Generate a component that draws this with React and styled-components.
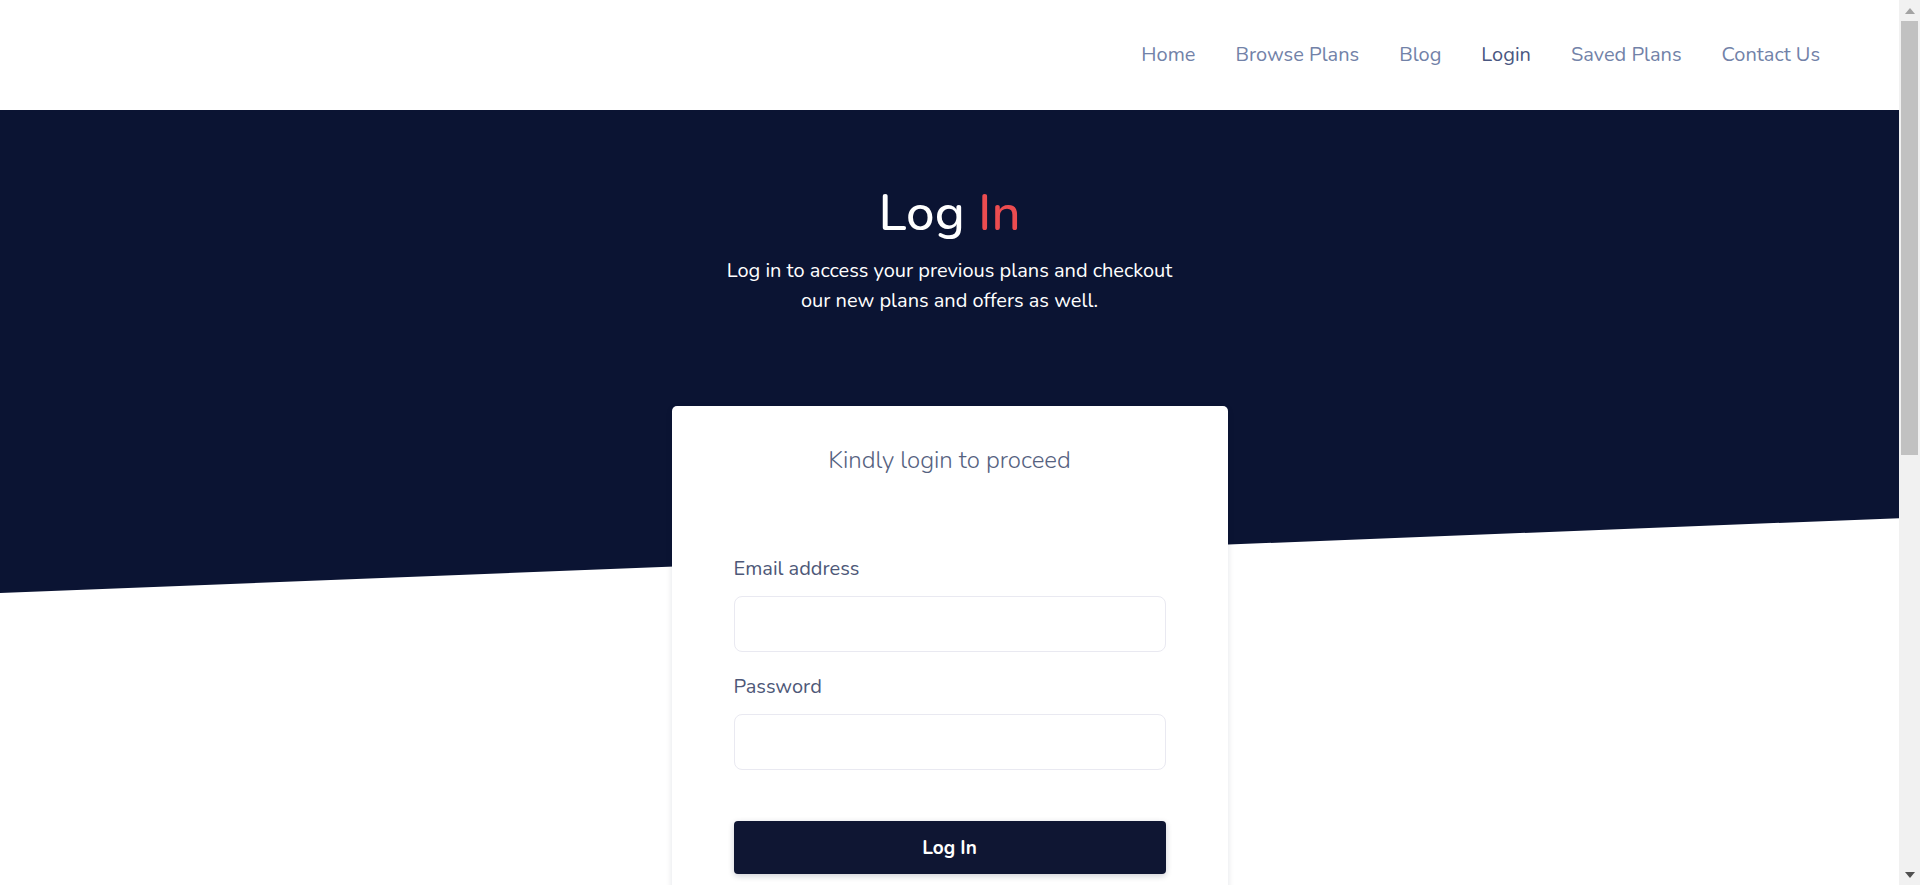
import React from "react";
import styled, { createGlobalStyle } from "styled-components";

const Global = createGlobalStyle`
  html, body { margin: 0; padding: 0; }
  body {
    font-family: "Nunito", "Lato", "Open Sans", sans-serif;
    background: #ffffff;
  }
  * { box-sizing: border-box; }
`;

const Page = styled.div`
  min-height: 1720px;
  margin-right: 21px;
  display: flex;
  flex-direction: column;
`;

const Header = styled.header`
  height: 110px;
  display: flex;
  align-items: center;
  justify-content: flex-end;
  padding: 0 79px 0 0;
  background: #fff;
`;

const Nav = styled.nav`
  display: flex;
  gap: 40px;
`;

const NavLink = styled.a`
  font-size: 20px;
  line-height: 28px;
  color: ${(p) => (p.$active ? "#4a5781" : "#7282a8")};
  text-decoration: none;
  cursor: pointer;
`;

const Hero = styled.section`
  height: 483px;
  background: #0b1433;
  clip-path: polygon(0 0, 100% 0, 100% 84.5%, 0 100%);
  display: flex;
  flex-direction: column;
  align-items: center;
  padding-top: 74px;
`;

const Title = styled.h1`
  margin: 0;
  font-size: 51px;
  line-height: 58px;
  font-weight: 500;
  color: #ffffff;
`;

const Accent = styled.span`
  color: #ec4c50;
`;

const Subtitle = styled.p`
  margin: 14px 0 0;
  font-size: 20px;
  line-height: 30px;
  color: #ffffff;
  text-align: center;
  max-width: 470px;
`;

const CardArea = styled.section`
  display: flex;
  justify-content: center;
  margin-top: -187px;
  position: relative;
`;

const Card = styled.div`
  width: 556px;
  background: #fff;
  border-radius: 5px;
  box-shadow: 0 2px 6px rgba(20, 30, 60, 0.12);
  padding: 38px 62px 60px;
  display: flex;
  flex-direction: column;
`;

const CardTitle = styled.h2`
  margin: 0 0 78px;
  font-size: 24px;
  line-height: 33px;
  font-weight: 300;
  color: #56627f;
  text-align: center;
`;

const Label = styled.label`
  font-size: 20px;
  line-height: 28px;
  color: #4e5878;
  margin-bottom: 13px;
`;

const Input = styled.input`
  height: 56px;
  width: 100%;
  border: 1px solid #e9e9f1;
  border-radius: 8px;
  background: #fff;
  padding: 0 16px;
  font-size: 16px;
  font-family: inherit;
  outline: none;
  margin-bottom: ${(p) => p.$mb || 0}px;
`;

const Button = styled.button`
  height: 53px;
  width: 100%;
  border: none;
  border-radius: 4px;
  background: #0f1633;
  color: #fff;
  font-family: inherit;
  font-size: 19px;
  font-weight: 700;
  cursor: pointer;
  box-shadow: 0 2px 6px rgba(15, 22, 51, 0.2);
`;

const ScrollTrack = styled.div`
  position: fixed;
  top: 0;
  right: 0;
  width: 21px;
  height: 100vh;
  background: #f1f1f1;
  display: flex;
  flex-direction: column;
  align-items: center;
  z-index: 10;
`;

const ScrollArrow = styled.div`
  height: 21px;
  width: 100%;
  display: flex;
  align-items: center;
  justify-content: center;
  flex-shrink: 0;
`;

const ScrollThumb = styled.div`
  width: 17px;
  height: 434px;
  background: #c1c1c1;
  flex-shrink: 0;
`;

const Spacer = styled.div`
  flex: 1;
`;

export default function App() {
  const links = ["Home", "Browse Plans", "Blog", "Login", "Saved Plans", "Contact Us"];
  return (
    <>
      <Global />
      <Page>
        <Header>
          <Nav>
            {links.map((l) => (
              <NavLink key={l} $active={l === "Login"}>
                {l}
              </NavLink>
            ))}
          </Nav>
        </Header>
        <Hero>
          <Title>
            Log <Accent>In</Accent>
          </Title>
          <Subtitle>
            Log in to access your previous plans and checkout our new plans and offers as well.
          </Subtitle>
        </Hero>
        <CardArea>
          <Card>
            <CardTitle>Kindly login to proceed</CardTitle>
            <Label>Email address</Label>
            <Input type="email" $mb={21} />
            <Label>Password</Label>
            <Input type="password" $mb={51} />
            <Button>Log In</Button>
          </Card>
        </CardArea>
      </Page>
      <ScrollTrack>
        <ScrollArrow>
          <svg width="10" height="6" viewBox="0 0 10 6">
            <polygon points="5,0 10,6 0,6" fill="#a3a3a3" />
          </svg>
        </ScrollArrow>
        <ScrollThumb />
        <Spacer />
        <ScrollArrow>
          <svg width="10" height="6" viewBox="0 0 10 6">
            <polygon points="0,0 10,0 5,6" fill="#505050" />
          </svg>
        </ScrollArrow>
      </ScrollTrack>
    </>
  );
}
